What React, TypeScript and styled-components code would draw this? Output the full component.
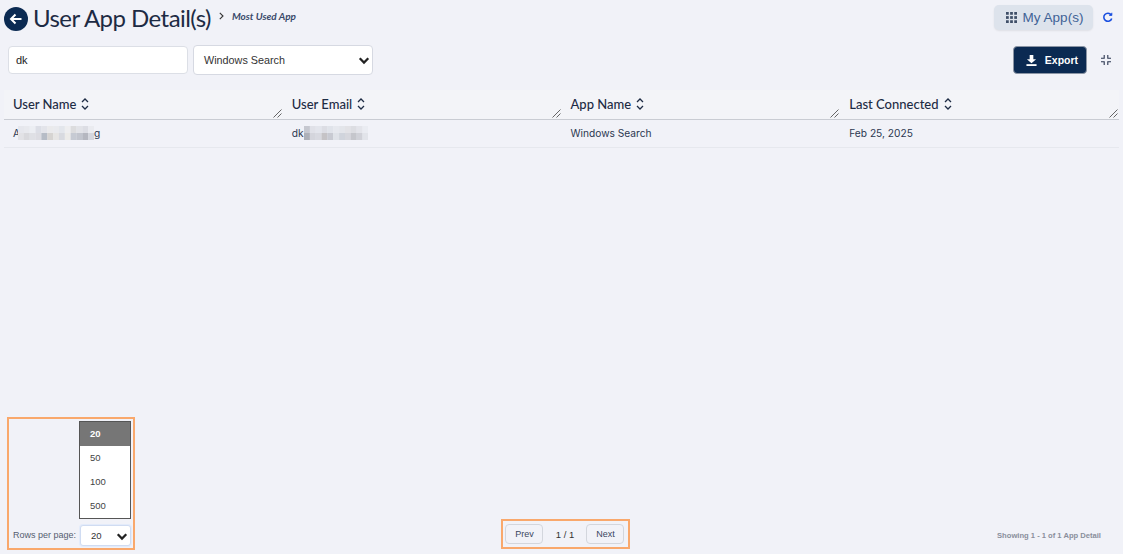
import React from 'react';
import styled, { createGlobalStyle } from 'styled-components';

const GlobalStyle = createGlobalStyle`
  html, body {
    margin: 0;
    padding: 0;
    background: #f1f2f8;
  }
  * {
    box-sizing: border-box;
  }
`;

const Page = styled.div`
  width: 1123px;
  height: 554px;
  display: flex;
  flex-direction: column;
  overflow: hidden;
  background: #f1f2f8;
  font-family: 'Lato', sans-serif;
  color: #1d2b44;
`;

const Header = styled.div`
  height: 36px;
  padding: 4px 10px 0 4px;
  display: flex;
  align-items: flex-start;
  justify-content: space-between;
`;

const TitleGroup = styled.div`
  display: flex;
  align-items: center;
`;

const BackButton = styled.div`
  width: 24px;
  height: 24px;
  margin-top: 1px;
  border-radius: 50%;
  background: #0b2a52;
  display: flex;
  align-items: center;
  justify-content: center;
`;

const Title = styled.h1`
  margin: 0 0 0 5px;
  font-size: 24px;
  font-weight: 400;
  letter-spacing: -0.55px;
  line-height: 28px;
  color: #1d2b44;
`;

const Crumb = styled.span`
  margin: 0 0 4px 8px;
  display: flex;
  align-items: center;
  gap: 8px;
  font-size: 10px;
  font-weight: 700;
  font-style: italic;
  color: #3a4a6b;
`;

const HeaderActions = styled.div`
  display: flex;
  align-items: center;
  gap: 9px;
`;

const AppsButton = styled.div`
  width: 99px;
  height: 25px;
  margin: 1px 0 0 0;
  padding-left: 2px;
  border-radius: 5px;
  background: #dde3ec;
  box-shadow: 0 1px 2px rgba(0, 0, 0, 0.08);
  display: flex;
  align-items: center;
  justify-content: center;
  gap: 6px;
  font-family: 'Liberation Sans', sans-serif;
  font-size: 13.5px;
  color: #3f6296;
`;

const FilterRow = styled.div`
  height: 54px;
  padding: 9px 12px 0 8px;
  display: flex;
  align-items: flex-start;
`;

const SearchBox = styled.div`
  width: 180px;
  height: 28px;
  margin-top: 1px;
  padding-left: 7px;
  background: #fff;
  border: 1px solid #dcdfe6;
  border-radius: 4px;
  display: flex;
  align-items: center;
  font-family: 'Liberation Sans', sans-serif;
  font-size: 11px;
  color: #222;
`;

const SelectBox = styled.div<{ $width: number; $height: number }>`
  width: ${(p) => p.$width}px;
  height: ${(p) => p.$height}px;
  background: #fff;
  border: 1px solid #d6d9e2;
  border-radius: 4px;
  display: flex;
  align-items: center;
  justify-content: space-between;
  font-family: 'Liberation Sans', sans-serif;
  font-size: 10.8px;
  color: #333;
`;

const FilterSelect = styled(SelectBox)`
  margin-left: 5px;
  padding: 0 2px 0 10px;
`;

const FilterActions = styled.div`
  margin-left: auto;
  display: flex;
  align-items: center;
  gap: 14px;
  padding-top: 1px;
`;

const ExportButton = styled.div`
  width: 74px;
  height: 28px;
  padding-left: 4px;
  background: #0b2a52;
  border: 1px solid #8b95a5;
  border-radius: 4px;
  display: flex;
  align-items: center;
  justify-content: center;
  gap: 8px;
  font-family: 'Liberation Sans', sans-serif;
  font-size: 10.5px;
  font-weight: 700;
  color: #fff;
`;

const TableWrap = styled.div`
  flex: 1;
  padding: 0 4px;
`;

const HeadRow = styled.div`
  height: 30px;
  display: grid;
  grid-template-columns: repeat(4, 1fr);
  border-bottom: 1px solid #c9ccd3;
  background: #f3f4f8;
`;

const HeadCell = styled.div`
  position: relative;
  padding: 0 0 1px 9px;
  display: flex;
  align-items: center;
  gap: 5px;
  font-size: 13px;
  font-weight: 500;
  color: #1d2b44;
`;

const Resizer = styled.svg`
  position: absolute;
  right: 1px;
  bottom: 1px;
`;

const BodyRow = styled.div`
  height: 28px;
  display: grid;
  grid-template-columns: repeat(4, 1fr);
  border-bottom: 1px solid #e6e8ee;
`;

const BodyCell = styled.div`
  padding: 0 0 1px 9px;
  display: flex;
  align-items: center;
  font-family: 'Inter', sans-serif;
  font-size: 10.2px;
  color: #2b3750;
`;

const MosaicSvg = styled.svg<{ $overlap?: number }>`
  margin-left: ${(p) => -(p.$overlap ?? 0)}px;
`;

const Footer = styled.div`
  height: 137px;
  padding: 0 22px 4px 7px;
  display: grid;
  grid-template-columns: 1fr 1fr 1fr;
  align-items: end;
`;

const Highlight = styled.div`
  border: 2px solid #f9a86c;
`;

const RowsBox = styled(Highlight)`
  position: relative;
  width: 128px;
  height: 133px;
  padding: 0 2px 2px 4px;
  display: flex;
  align-items: flex-end;
  justify-content: space-between;
`;

const RowsLabel = styled.span`
  margin-bottom: 6px;
  font-family: 'Liberation Sans', sans-serif;
  font-size: 9px;
  color: #555e70;
`;

const RowsSelect = styled(SelectBox)`
  padding: 0 2px 0 10px;
  border: 1px solid #d0dcf2;
  box-shadow: 0 0 0 1px #e3ebfa;
  border-radius: 3px;
  font-size: 9.5px;
`;

const OptionList = styled.ul`
  position: absolute;
  top: 2px;
  right: 2px;
  width: 52px;
  height: 98px;
  margin: 0;
  padding: 0;
  list-style: none;
  background: #fff;
  border: 1px solid #555;
`;

const Option = styled.li<{ $selected?: boolean }>`
  height: 24px;
  padding: 0 0 2px 10px;
  display: flex;
  align-items: center;
  font-family: 'Liberation Sans', sans-serif;
  font-size: 9.5px;
  font-weight: ${(p) => (p.$selected ? 700 : 400)};
  background: ${(p) => (p.$selected ? '#767676' : '#fff')};
  color: ${(p) => (p.$selected ? '#fff' : '#444')};
`;

const Pager = styled(Highlight)`
  justify-self: center;
  margin: 0 0 1px 24px;
  width: 129px;
  height: 30px;
  padding: 0 4px 0 2px;
  display: flex;
  align-items: center;
  justify-content: space-between;
  font-family: 'Liberation Sans', sans-serif;
  font-size: 9.5px;
  color: #333;
`;

const PageButton = styled.div`
  width: 38px;
  height: 20px;
  border: 1px solid #d3d6dd;
  border-radius: 4px;
  display: flex;
  align-items: center;
  justify-content: center;
  font-size: 9px;
  color: #3a4660;
`;

const Showing = styled.div`
  justify-self: end;
  margin-bottom: 10px;
  font-family: 'Liberation Sans', sans-serif;
  font-size: 7.6px;
  font-weight: 700;
  color: #8a8f9c;
`;

const Chevron = ({ size = 12, color = '#222' }: { size?: number; color?: string }) => (
  <svg width={size} height={size} viewBox="0 0 14 14" fill="none">
    <path d="M2 5l5 5 5-5" stroke={color} strokeWidth="2.6" />
  </svg>
);

const SortIcon = () => (
  <svg width="8" height="14" viewBox="0 0 8 14" fill="none" stroke="#1d2b44" strokeWidth="1.3">
    <path d="M1 5l3-3 3 3" />
    <path d="M1 9l3 3 3-3" />
  </svg>
);

const ResizeIcon = () => (
  <Resizer width="9" height="9" viewBox="0 0 9 9" fill="none" stroke="#555" strokeWidth="0.9">
    <path d="M0.5 8.5l8-8" />
    <path d="M4.5 8.5l4-4" />
  </Resizer>
);

// pixelated stand-in for the blurred personal data
const Mosaic = ({ top, bottom, overlap }: { top: string[]; bottom: string[]; overlap?: number }) => (
  <MosaicSvg $overlap={overlap} width={top.length * 5.85} height="14" viewBox={`0 0 ${top.length} 2`} preserveAspectRatio="none">
    {top.map((s, i) => (
      <rect key={i} x={i} y={0} width={1.02} height={1} fill={s} />
    ))}
    {bottom.map((s, i) => (
      <rect key={`b${i}`} x={i} y={1} width={1.02} height={1} fill={s} />
    ))}
  </MosaicSvg>
);

const nameTop = ['#e6e7ed', '#e8e9ee', '#eceef3', '#dcdee6', '#e3e4ea', '#eaeaec', '#e9eaee', '#e3e6ec', '#eeeef0', '#dcdcde', '#e2e3e8', '#dcdde4', '#eaebf0'];
const nameBottom = ['#e2e2e6', '#d9d9dd', '#dfe0e5', '#dcdce2', '#b6bcc6', '#d6d4d2', '#e6e5e4', '#d8dae0', '#ecebe9', '#c6cad3', '#c2c5ce', '#b5b7c0', '#d4d6de'];
const mailTop = ['#c6c8d0', '#e0e1e8', '#e3e5ec', '#dcdde4', '#e0e3ea', '#e6e8ee', '#e3e5ea', '#e2e2e6', '#dcdde2', '#e3e4ea', '#eaecf2'];
const mailBottom = ['#adb0b8', '#d4d5dc', '#d8d9e0', '#c5c3c6', '#c8cad2', '#dfe2e8', '#d0d4dc', '#d6d7dd', '#c5c6cc', '#d0d1d8', '#e2e4ea'];

const App = () => {
  return (
    <>
      <GlobalStyle />
      <Page>
        <Header>
          <TitleGroup>
            <BackButton>
              <svg width="16" height="16" viewBox="0 0 16 16" fill="none" stroke="#fff" strokeWidth="2">
                <path d="M13.5 8H3M7.5 3.5L3 8l4.5 4.5" />
              </svg>
            </BackButton>
            <Title>User App Detail(s)</Title>
            <Crumb>
              <svg width="5" height="8" viewBox="0 0 5 8" fill="none" stroke="#333" strokeWidth="1.1">
                <path d="M0.8 0.8L4 4 0.8 7.2" />
              </svg>
              Most Used App
            </Crumb>
          </TitleGroup>
          <HeaderActions>
            <AppsButton>
              <svg width="11" height="11" viewBox="0 0 12 12" fill="#3f4f68">
                {[0, 4.5, 9].flatMap((y) =>
                  [0, 4.5, 9].map((x) => <rect key={`${x}-${y}`} x={x} y={y} width="3" height="3" />)
                )}
              </svg>
              My App(s)
            </AppsButton>
            <svg width="11" height="11" viewBox="0 0 12 12" fill="none" stroke="#1a4fe0" strokeWidth="1.7">
              <path d="M10 3.2A4.4 4.4 0 1 0 10.6 7" />
              <path d="M10.8 0.8v3H7.8" fill="#1a4fe0" strokeWidth="0.8" />
            </svg>
          </HeaderActions>
        </Header>

        <FilterRow>
          <SearchBox>dk</SearchBox>
          <FilterSelect $width={180} $height={30}>
            Windows Search
            <Chevron />
          </FilterSelect>
          <FilterActions>
            <ExportButton>
              <svg width="11" height="11" viewBox="0 0 12 12" fill="#fff">
                <path d="M4 0h4v4.5h3L6 9 1 4.5h3z" />
                <rect x="0.5" y="10" width="11" height="2" />
              </svg>
              Export
            </ExportButton>
            <svg width="10" height="10" viewBox="0 0 10 10" fill="none" stroke="#2b3750" strokeWidth="1.1">
              <path d="M3.2 0v3.2H0M6.8 0v3.2H10M3.2 10V6.8H0M6.8 10V6.8H10" />
            </svg>
          </FilterActions>
        </FilterRow>

        <TableWrap>
          <HeadRow>
            {['User Name', 'User Email', 'App Name', 'Last Connected'].map((h) => (
              <HeadCell key={h}>
                {h}
                <SortIcon />
                <ResizeIcon />
              </HeadCell>
            ))}
          </HeadRow>
          <BodyRow>
            <BodyCell>
              A<Mosaic top={nameTop} bottom={nameBottom} overlap={2} />g
            </BodyCell>
            <BodyCell>
              dk<Mosaic top={mailTop} bottom={mailBottom} />
            </BodyCell>
            <BodyCell>Windows Search</BodyCell>
            <BodyCell>Feb 25, 2025</BodyCell>
          </BodyRow>
        </TableWrap>

        <Footer>
          <RowsBox>
            <RowsLabel>Rows per page:</RowsLabel>
            <RowsSelect $width={51} $height={21}>
              20
              <Chevron />
            </RowsSelect>
            <OptionList>
              <Option $selected>20</Option>
              <Option>50</Option>
              <Option>100</Option>
              <Option>500</Option>
            </OptionList>
          </RowsBox>
          <Pager>
            <PageButton>Prev</PageButton>
            1 / 1
            <PageButton>Next</PageButton>
          </Pager>
          <Showing>Showing 1 - 1 of 1 App Detail</Showing>
        </Footer>
      </Page>
    </>
  );
};

export default App;
